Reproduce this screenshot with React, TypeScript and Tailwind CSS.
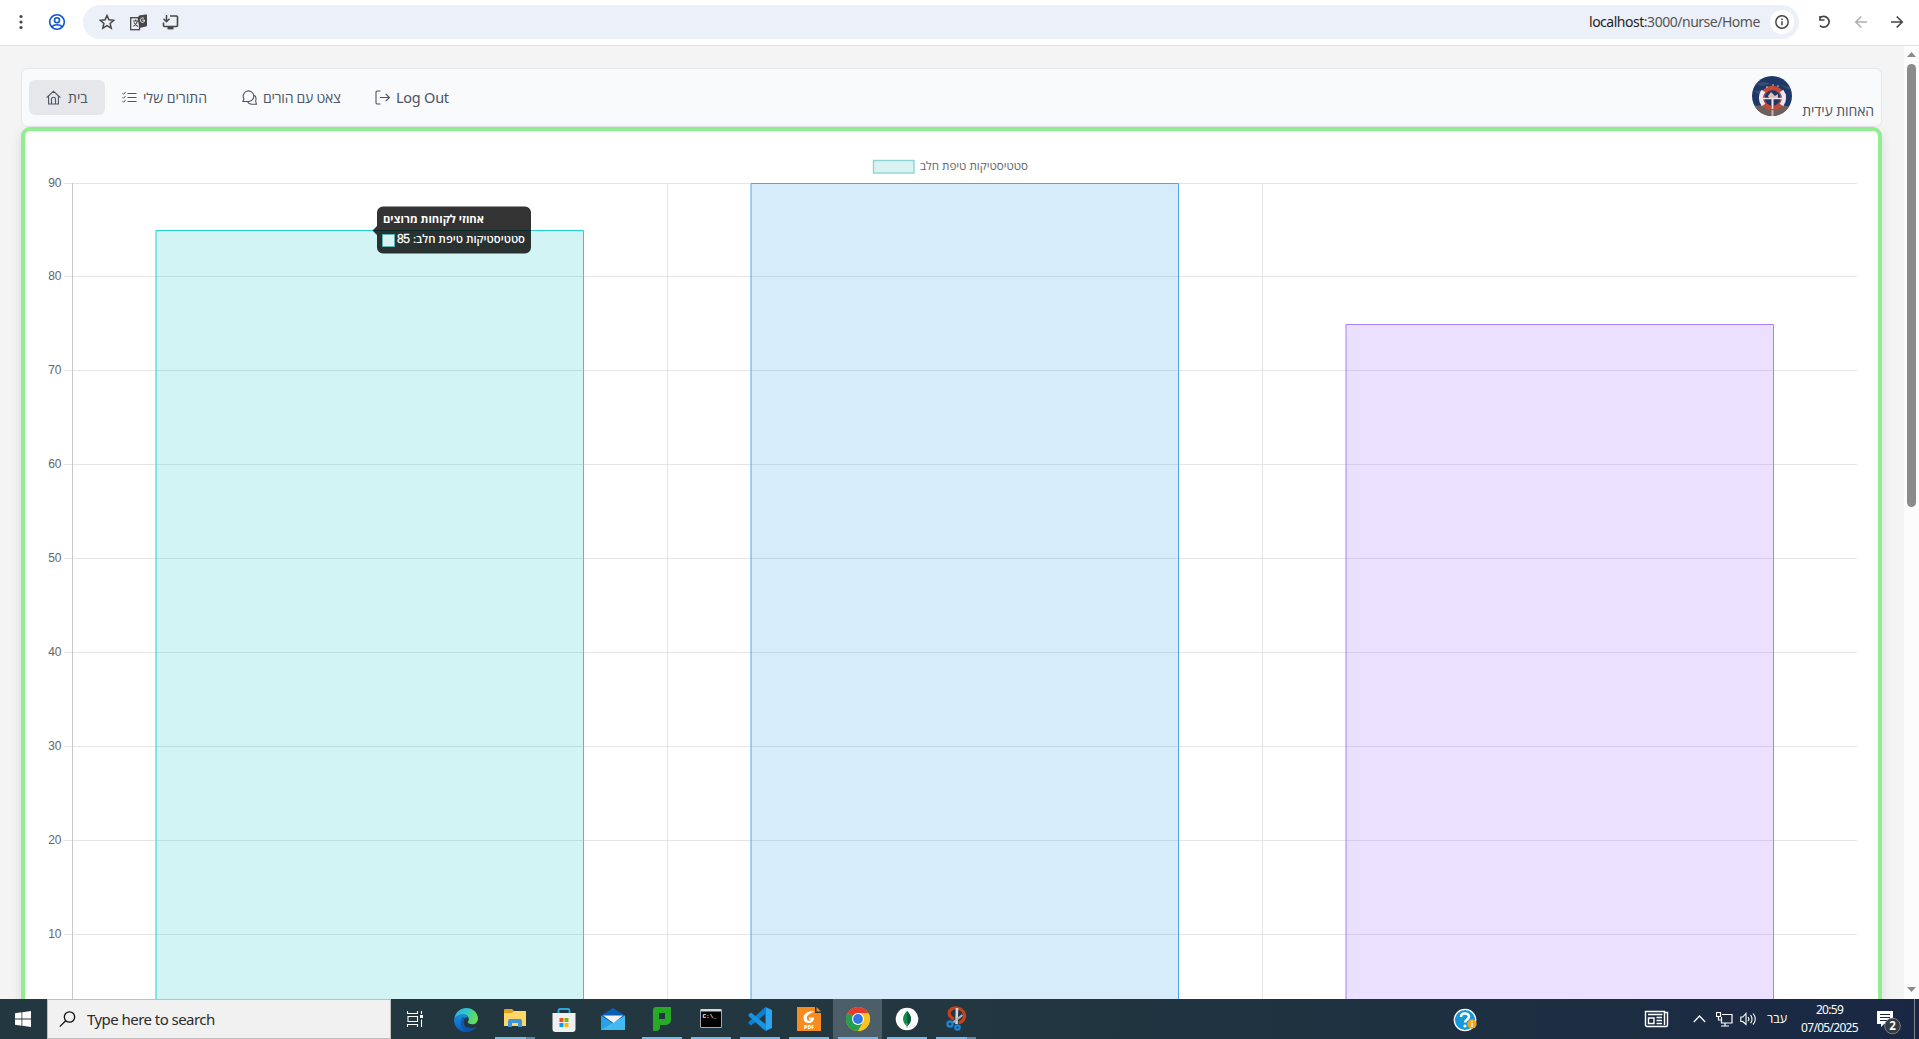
import React from "react";

const UI = "font-['Noto_Sans','Open_Sans',sans-serif]";

const ticks = [
  { v: 90, y: 183.5 },
  { v: 80, y: 276.5 },
  { v: 70, y: 370.5 },
  { v: 60, y: 464.5 },
  { v: 50, y: 558.5 },
  { v: 40, y: 652.5 },
  { v: 30, y: 746.5 },
  { v: 20, y: 840.5 },
  { v: 10, y: 934.5 },
];

const bars = [
  { x: 156, top: 230.5, fill: "rgba(34,202,202,.2)", stroke: "#26d0ce" },
  { x: 751, top: 183.5, fill: "rgba(54,162,235,.2)", stroke: "#4ba9ea" },
  { x: 1346, top: 324.5, fill: "rgba(153,102,255,.2)", stroke: "#a980f5" },
];

function Chart() {
  // viewBox offsets keep the coordinates in window space
  return (
    <svg className="block h-[868px] w-[1853px] shrink-0" viewBox="25 131 1853 868" fontFamily="'Liberation Sans', sans-serif" fontSize="12">
      {ticks.map((t) => (
        <g key={t.v}>
          <path d={`M64 ${t.y}H1857`} stroke="#e5e5e5" />
          <text x="61.5" y={t.y + 3} textAnchor="end" fill="#666">{t.v}</text>
        </g>
      ))}
      <path d="M667.5 183V999M1262.5 183V999" stroke="#e5e5e5" />
      <path d="M72.5 183V999" stroke="#c8c8c8" />
      {bars.map((b) => (
        <path key={b.x} d={`M${b.x} 1010V${b.top}H${b.x + 427.5}V1010`} fill={b.fill} stroke={b.stroke} />
      ))}
      <rect x="873.5" y="160.5" width="40.5" height="12.5" fill="#dbf2f2" stroke="#8fd4d4" strokeWidth="1.4" />
      <text x="1028" y="170" direction="rtl" fill="#666" fontFamily="'Open Sans'" fontSize="11.5" textLength="108" lengthAdjust="spacingAndGlyphs">סטטיסטיקות טיפת חלב</text>
      <path d="M383 206.5H525a6 6 0 0 1 6 6V247.500a6 6 0 0 1-6 6H383a6 6 0 0 1-6-6V235L372.500 230.500L377 226V212.500a6 6 0 0 1 6-6Z" fill="#000" fillOpacity=".8" />
      <text x="484" y="223" direction="rtl" fill="#fff" fontFamily="'Open Sans'" fontWeight="700" fontSize="11.5" textLength="101" lengthAdjust="spacingAndGlyphs">אחוזי לקוחות מרוצים</text>
      <rect x="382.500" y="234.500" width="12" height="12" fill="#dbf2f2" stroke="#4bc0c0" strokeOpacity=".75" />
      <text x="525" y="243" direction="rtl" fill="#fff" fontFamily="'Open Sans'" fontWeight="600" fontSize="11.5" textLength="112" lengthAdjust="spacingAndGlyphs">סטטיסטיקות טיפת חלב:</text>
      <text x="397" y="243" fill="#fff" stroke="#fff" strokeWidth=".3" textLength="13">85</text>
    </svg>
  );
}

function Ico({ w, h = w, vb, className = "", children }: { w: number; h?: number; vb?: string; className?: string; children: React.ReactNode }) {
  return (
    <svg width={w} height={h} viewBox={vb || `0 0 ${w} ${h}`} fill="none" stroke="currentColor" className={"shrink-0 " + className}>
      {children}
    </svg>
  );
}

function BrowserBar() {
  return (
    <header className="flex h-[46px] shrink-0 items-start border-b border-[#dfe0e1] bg-white pt-[5px] text-[#474747]">
      <Ico w={83} h={34}>
        <g fill="currentColor" stroke="none"><circle cx="21" cy="11.500" r="1.600" /><circle cx="21" cy="17" r="1.600" /><circle cx="21" cy="22.500" r="1.600" /></g>
        <g stroke="#0b57d0" strokeWidth="1.600"><circle cx="57" cy="17" r="7.300" /><circle cx="57" cy="15.300" r="2.500" /><path d="M51.500 22c3-3 8-3 11 0" /></g>
      </Ico>
      <div className="flex h-[34px] w-[1716px] items-center rounded-full bg-[#ecf0f9] pl-[16px] pr-[5px]">
        <Ico w={14} vb="0 0 14 14" className="h-[16px] w-[16px]"><path d="M7 1.300l1.700 3.800 4.200.4-3.200 2.800 1 4.100L7 10.200l-3.700 2.200 1-4.100L1.100 5.500l4.200-.4z" strokeWidth="1.300" /></Ico>
        <Ico w={17} className="ml-[15px]">
          <path d="M9 1.500L15.500 0.500a1 1 0 0 1 1.500 1V11.500a1 1 0 0 1-1 1L9.500 14L7.500 4z" fill="currentColor" stroke="none" />
          <rect x=".7" y="3.700" width="8.800" height="12" strokeWidth="1.300" />
          <path d="M3 7h5.500M5.700 5.500V7M7.500 7c-.5 2.500-2 4-4 5.200M4 8.500c1 1.800 2 3 3.800 4" strokeWidth="1.100" />
          <path d="M14.500 6.200h-2.200M14.500 6.200c0 1.500-1 2.300-2 2.300s-2-1-2-2.300 1-2.300 2-2.300c.6 0 1 .2 1.400.6" stroke="#fff" strokeWidth="1" />
        </Ico>
        <Ico w={17} className="ml-[15px]">
          <path d="M8 2h6.500a1 1 0 0 1 1 1v8.500a1 1 0 0 1-1 1h-12a1 1 0 0 1-1-1V8.500" strokeWidth="1.600" />
          <path d="M4.500 1v6M1.500 4.800l3 3 3-3" strokeWidth="1.500" />
          <path d="M5.500 14.200h6" strokeWidth="2.400" />
        </Ico>
        <div className={`ml-auto w-[171px] whitespace-nowrap text-[14px] tracking-[-0.48px] leading-[20px] text-[#555] ${UI}`}>
          <span className="text-[#1f1f1f]">localhost</span>:3000/nurse/Home
        </div>
        <div className="ml-[10px] grid size-[24px] place-items-center rounded-full bg-white">
          <Ico w={16}><circle cx="8" cy="8" r="6.200" strokeWidth="1.500" /><path d="M8 7.300v3.900M8 4.600v1.500" strokeWidth="1.500" /></Ico>
        </div>
      </div>
      <Ico w={120} h={34}>
        <path d="M21 12.800A5.400 5.400 0 1 1 20.800 20.500M21 11v4h4.500" strokeWidth="1.700" />
        <path d="M68 17H57M62.300 11.500L56.800 17l5.500 5.500" stroke="#b0b0b0" strokeWidth="1.600" />
        <path d="M92 17h11M97.700 11.500l5.500 5.500-5.500 5.500" strokeWidth="1.700" />
      </Ico>
    </header>
  );
}

function NavItem({ label, icon, box, text }: { label: string; icon: React.ReactNode; box: string; text: string }) {
  return (
    <a className={"flex h-[35px] items-center rounded-[6px] pl-[17px] " + box}>
      {icon}
      <span className={"ml-[6px] whitespace-nowrap leading-[20px] " + text}>{label}</span>
    </a>
  );
}

function NavBar() {
  return (
    <nav className={`flex h-[59px] w-[1861px] shrink-0 rounded-[6px] border border-[#e5e7eb] bg-[#f9fafb] pl-[7px] pt-[11px] text-[#4b5563] ${UI}`}>
      <NavItem label="בית" box="w-[76px] bg-[#e5e7eb]" text="text-[14px] pl-[1px]" icon={
        <Ico w={15}><path d="M.6 7.600L7.500 1.300l6.900 6.300M2.600 6v8h9.800V6M5.500 14V9.200a2 2 0 0 1 4 0V14" strokeWidth="1.100" /></Ico>} />
      <NavItem label="התורים שלי" box="w-[120px]" text="text-[14px]" icon={
        <Ico w={15}><path d="M5.500 3.500h9M5.500 7.500h9M5.500 11.500h9M.5 3.200l1.100 1.100 2-2.400M.5 7.200l1.100 1.100 2-2.400M.5 11.200l1.100 1.100 2-2.400" strokeWidth="1" /></Ico>} />
      <NavItem label="צאט עם הורים" box="w-[133px]" text="text-[14px] tracking-[-0.25px]" icon={
        <Ico w={15}><path d="M.8 11.500h5.500a5.300 5.300 0 1 0-4.300-2.500zM12.200 5.200a5 5 0 0 1 1.400 5.700l.8 3.300H9.500a5 5 0 0 1-4.200-2.700" strokeWidth="1.100" /></Ico>} />
      <NavItem label="Log Out" box="w-[110px]" text="-mt-[1px] text-[14.5px] tracking-[-0.25px]" icon={
        <Ico w={15}><path d="M5.500 1H2.300A1.300 1.300 0 0 0 1 2.300v10.400A1.300 1.300 0 0 0 2.300 14h3.200M5 7.500h9.300M10.700 3.800l3.700 3.700-3.700 3.700" strokeWidth="1.100" /></Ico>} />
      <div className="ml-auto flex gap-[10px] pr-[8px]">
        <svg className="-mt-[4px] size-[40px] rounded-full" viewBox="0 0 40 40">
          <rect width="40" height="40" fill="#1d3766" />
          <path d="M0 8l12-2 8 2-10 2zM2 15l9-1 3 2-8 2zM28 9l10 2v3z" fill="#394c74" />
          <path d="M0 30l12-1 9 3 8-3 11 2v10H0z" fill="#70605c" />
          <path d="M19.500 21h2v19h-2z" fill="#c9b5b5" />
          <circle cx="20.500" cy="22" r="10" fill="none" stroke="#c74a34" strokeWidth="4.500" />
          <path d="M11.500 15a11.500 11.500 0 0 0 0 14M29.500 15a11.500 11.500 0 0 1 0 14" fill="none" stroke="#f2e6f3" strokeWidth="4.500" />
          <path d="M13.500 17a9 9 0 0 0 0 10M27.500 17a9 9 0 0 1 0 10" fill="none" stroke="#5a5580" strokeWidth=".8" />
          <path d="M8 22.500h25M20.500 22v11" stroke="#f0e4e4" strokeWidth="1.500" />
          <path d="M16 20l3-4 4 4 3-2v4h-9z" fill="#dfc0bd" />
          <g fill="#fff"><circle cx="21" cy="9" r=".7" /><circle cx="26" cy="10" r=".7" /><circle cx="15" cy="11" r=".7" /><circle cx="9" cy="16" r=".7" /><circle cx="33" cy="19" r=".7" /></g>
        </svg>
        <span className="-mr-[1px] mt-[19px] w-[72px] whitespace-nowrap text-[14px] leading-[24px] tracking-[-0.1px]" dir="rtl">האחות עידית</span>
      </div>
    </nav>
  );
}

function Slot({ children, className = "", run }: { children: React.ReactNode; className?: string; run?: "one" | "many" }) {
  return (
    <div className={"flex h-[40px] w-[49px] flex-col items-center " + className}>
      <div className="grid h-[38px] w-full flex-1 place-items-center pt-[1px]">{children}</div>
      {run && (
        <div className="flex h-[2px] w-[40px]">
          <i className="flex-1 bg-[#76b9ed]" />
          {run === "many" && <i className="w-[9px] bg-[#5b86a8]" />}
        </div>
      )}
    </div>
  );
}

function TaskBar() {
  return (
    <footer className={`flex h-[40px] w-full shrink-0 bg-linear-to-r from-[#223740] from-50% via-[#1d3040] via-75% to-[#1a2744] text-white ${UI}`}>
      <div className="grid w-[47px] place-items-center pr-[1px]">
        <svg width="16" height="16" viewBox="0 0 16 16" fill="#fff"><path d="M0 2.200l6.500-.9v6.300H0zM7.300 1.200L16 0v7.600H7.300zM0 8.400h6.500v6.300L0 13.800zM7.300 8.400H16V16l-8.700-1.200z" /></svg>
      </div>
      <div className="flex w-[344px] items-center border border-[#bfbfbf] bg-[#f1f1f1] pl-[11px] text-[#2b2b2b]">
        <Ico w={17} className="text-[#111]"><circle cx="10.500" cy="6" r="5.200" strokeWidth="1.300" /><path d="M6.700 9.700L.8 15.600" strokeWidth="1.300" /></Ico>
        <span className="ml-[11px] whitespace-nowrap text-[15px] tracking-[-0.55px]">Type here to search</span>
      </div>
      <Slot>
        <Ico w={17}><path d="M.5 0v2.500h10V0M.5 16v-2.500h10V16M1 5.500h9.500v5H1zM14.500 0v3M14.500 8.500V16" strokeWidth="1.100" /><path d="M13 4h3v3h-3z" fill="#fff" stroke="none" /></Ico>
      </Slot>
      <div className="flex pl-px">
        <Slot>
          <svg width="24" height="24" viewBox="0 0 24 24">
            <defs>
              <linearGradient id="eg" x1="0" y1="0" x2="1" y2=".3"><stop offset="0" stopColor="#27b0e6" /><stop offset=".5" stopColor="#2fc5cf" /><stop offset="1" stopColor="#66dd54" /></linearGradient>
              <linearGradient id="eb" x1="0" y1="0" x2="0" y2="1"><stop offset="0" stopColor="#1b8ddb" /><stop offset="1" stopColor="#0a5dbd" /></linearGradient>
            </defs>
            <path d="M.3 10.500C1.500 4 6.500 0 12.300 0 19 0 24 5 24 10.500c0 3.500-2.500 5.800-5.700 5.800-3 0-4.500-1.300-4.500-2.200 0-.7 1-1 1-3 0-2.300-2-4.600-5.500-4.600-4 0-7.500 2.300-9 4z" fill="url(#eg)" />
            <path d="M.1 11.500C1 8 5 6.500 8.500 6.500c3 0 5.300 1.600 6 3-3-1-5 1.500-5 4.500 0 5 5 8 12.500 5C20 22 16 24 12 24 5.500 24-.5 18.500.1 11.500z" fill="url(#eb)" />
            <path d="M8.500 9C6 12 5.500 20 12 23.800c4 .2 8-2 10-5-7 3-12.500 0-12.500-4.800 0-2 .5-3.500 2-4.500z" fill="#0f4b9c" opacity=".65" />
          </svg>
        </Slot>
        <Slot run="many">
          <svg width="22" height="19" viewBox="0 0 22 19"><path d="M0 1a1 1 0 0 1 1-1h7l2 2h11a1 1 0 0 1 1 1v14H0z" fill="#e3a21a" /><path d="M0 4h8l2-2h11a1 1 0 0 1 1 1v14H0z" fill="#ffd766" /><path d="M4 18V12a2 2 0 0 1 2-2h10a2 2 0 0 1 2 2v6h-4v-4H8v4z" fill="#3e95d9" /></svg>
        </Slot>
        <Slot>
          <svg width="24" height="24" viewBox="0 0 24 24"><path d="M6.500 6V2.500A1.500 1.500 0 0 1 8 1h8a1.500 1.500 0 0 1 1.500 1.500V6" fill="none" stroke="#2aa7dd" strokeWidth="1.800" /><path d="M.5 5h23v16a3 3 0 0 1-3 3h-17a3 3 0 0 1-3-3z" fill="#f0f0f0" /><path fill="#f25022" d="M7.500 10h4v4h-4z" /><path fill="#7fba00" d="M12.500 10h4v4h-4z" /><path fill="#00a4ef" d="M7.500 15h4v4h-4z" /><path fill="#ffb900" d="M12.500 15h4v4h-4z" /></svg>
        </Slot>
        <Slot>
          <svg width="24" height="23" viewBox="0 0 24 23"><path d="M0 7.500L12 0l12 7.500-12 8z" fill="#0a5db5" /><path d="M0 7.500L13 16l11-8.500V22H0z" fill="#2aa3e6" /><path d="M0 22L24 7.500V22z" fill="#43b9f2" /><path d="M2 7.500h20l-9.500 7.500z" fill="#f2f2f2" /></svg>
        </Slot>
        <Slot run="one">
          <svg width="18" height="24" viewBox="0 0 18 24"><path d="M3 0h15v13a5 5 0 0 1-5 5H7v2a4 4 0 0 1-4 4H0V3a3 3 0 0 1 3-3z" fill="#27ab27" /><path d="M6 6h6v6H6z" fill="#20363e" /></svg>
        </Slot>
        <Slot run="one">
          <svg width="22" height="19" viewBox="0 0 22 19"><path d="M.5.5h21v18H.5z" fill="#000" stroke="#a7a7a7" /><path d="M1 0h20v2.500H1z" fill="#d8d8d8" /><text x="2.500" y="8.500" fontSize="6" fontFamily="Liberation Mono" fontWeight="700" fill="#fff">C:\_</text></svg>
        </Slot>
        <Slot run="one">
          <svg width="24" height="24" viewBox="0 0 24 24"><path d="M17.500 0L24 3v18l-6.500 3z" fill="#2aa5f2" /><path d="M18 6.500L3 18.500.5 16.500v-1.500L17.500 0z" fill="#0d7fcf" /><path d="M18 17.500L3 5.500.5 7.500V9l17 15z" fill="#1b92e0" /></svg>
        </Slot>
        <Slot run="one">
          <svg width="24" height="24" viewBox="0 0 24 24"><path d="M0 0h18v6h6v18H0z" fill="#f68b1f" /><path d="M19.500 0l4.500 4.500h-4.500z" fill="#f68b1f" /><path d="M17.500 4.500c-5-1-11 1.500-11 6.500 0 4 3 5 5.500 5 3.500 0 5-2.500 5-5.500h-5v2h2c-.5 1-1 1.300-2 1.300-1.500 0-2.200-1-2.200-2.800 0-3 3-4.500 7.700-6.500z" fill="#fff" /><text x="7" y="22.300" fontSize="5" fontWeight="800" fontFamily="Open Sans" fill="#fff" textLength="10">PDF</text></svg>
        </Slot>
        <Slot run="one" className="bg-[#4c5e68]">
          <svg width="24" height="24" viewBox="0 0 24 24"><circle cx="12" cy="12" r="12" fill="#fcc31e" /><path d="M12 12L1.600 6A12 12 0 0 1 22.400 6z" fill="#e33b2e" /><path d="M1.600 6A12 12 0 0 0 12 24l5.200-9L12 12z" fill="#239f4f" /><path d="M12 6h10.400A12 12 0 0 1 12 24l5.200-9z" fill="#fcc31e" /><circle cx="12" cy="12" r="6" fill="#fff" /><circle cx="12" cy="12" r="4.900" fill="#3277e5" /></svg>
        </Slot>
        <Slot run="one">
          <svg width="24" height="24" viewBox="0 0 24 24"><circle cx="12" cy="12" r="11.300" fill="#fff" /><path d="M12 4c6 6 4.500 12 0 15.500C7.500 16 6 10 12 4z" fill="#178a4d" /><path d="M12 4c6 6 4.500 12 0 15.500z" fill="#0b5c43" /><path d="M12 16v5" stroke="#8a9" /></svg>
        </Slot>
        <Slot run="many">
          <svg width="22" height="25" viewBox="0 0 22 25" fill="none"><path d="M9 13C4.500 11 3 7.500 5 4.500S12 1 16 3.500s4.500 7 2.500 10-5 3-5 3" stroke="#c8401c" strokeWidth="3.200" /><path d="M12 2l-.5 16" stroke="#d5d8da" strokeWidth="2.600" /><path d="M17.500 9L8 16.500" stroke="#a9afb3" strokeWidth="2.200" /><circle cx="5" cy="18" r="2.600" stroke="#1e86d8" strokeWidth="2.200" /><circle cx="12.500" cy="21.500" r="2.200" stroke="#1e86d8" strokeWidth="2.200" /></svg>
        </Slot>
      </div>
      <div className="ml-auto flex w-[466px] items-center">
        <svg className="mt-[1px] shrink-0" width="25" height="24" viewBox="0 0 25 24"><circle cx="12" cy="12" r="10.700" fill="#1698d8" stroke="#fff" strokeWidth="1.300" /><path d="M8 9c0-5 8-4.500 8-.5 0 3-4 3-4 6" fill="none" stroke="#fff" strokeWidth="2.500" /><circle cx="12" cy="18" r="1.600" fill="#fff" /><circle cx="19" cy="16" r="4.700" fill="#f6a21b" /><path d="M19 13v1.200M19 15v4" stroke="#fff" strokeWidth="1.500" /></svg>
        <Ico w={25} h={18} className="ml-[166px]"><path d="M20.500 2.500h3V15a1.500 1.500 0 0 1-1.500 1.500H3A1.500 1.500 0 0 1 1.500 15V1.500h19V15M4 4.500h14.500M4.500 8h5.500v5.500H4.500zM12.500 7.500H18M12.500 10.500H18M12.500 13.500H18" strokeWidth="1.400" /></Ico>
        <Ico w={13} h={8} className="ml-[24px]"><path d="M.8 7l5.700-6 5.700 6" strokeWidth="1.300" /></Ico>
        <Ico w={17} h={15} className="ml-[10px]"><path d="M6 2.500h10v8.500H5.500V5M9 11v3M5 14h8M.5.500h4v4h-4zM2.500 4.500v3.500h3" strokeWidth="1.200" /></Ico>
        <Ico w={18} h={14} className="ml-[7px]"><path d="M.8 5v4.500h2L6 12.500V1.500L2.800 5zM8 5c1 1.200 1 3 0 4M10.500 3c2 2.500 2 6 0 8M13 1.500c3 3.500 3 8 0 11" strokeWidth="1.100" /></Ico>
        <span className="ml-[9px] w-[22px] whitespace-nowrap text-[12.5px]">עבר</span>
        <div className="ml-[3px] w-[75px] text-center text-[12px] leading-[18px] tracking-[-0.7px]"><div>20:59</div><div className="whitespace-nowrap">07/05/2025</div></div>
        <svg className="ml-[6px] mt-[6px] shrink-0" width="32" height="30" viewBox="0 0 32 30"><path d="M4 4h16v13H11l-3 3v-3H4z" fill="#fff" /><path d="M7 7.500h10M7 10.500h10M7 13.500h10" stroke="#1b2944" /><circle cx="19.500" cy="19" r="7.800" fill="#363a40" stroke="#7b8088" /><text x="19.500" y="23.200" textAnchor="middle" fontSize="11.500" fontWeight="700" fill="#fff">2</text></svg>
        <i className="ml-auto mr-[4px] h-[40px] w-px bg-[#7d8593]" />
      </div>
    </footer>
  );
}

export default function App() {
  return (
    <div className="flex h-[1039px] w-[1919px] flex-col overflow-hidden bg-[#f4f4f4]">
      <BrowserBar />
      <main className="flex h-[953px] shrink-0 overflow-hidden">
        <div className="flex flex-1 flex-col overflow-hidden pl-[21px] pt-[22px]">
          <NavBar />
          <section className="h-[1000px] w-[1861px] shrink-0 rounded-[9px] border-4 border-[#90ee90] bg-white shadow-[0_4px_12px_rgba(0,0,0,0.1)]">
            <Chart />
          </section>
        </div>
        <div className="flex w-[15px] flex-col items-center bg-[#fcfcfc] pt-[6px]">
          <svg width="9" height="5" viewBox="0 0 9 5"><path d="M0 5L4.500 0 9 5z" fill="#8b8b8b" /></svg>
          <div className="mt-[7px] h-[443px] w-[9px] rounded-full bg-[#8b8b8b]" />
          <svg className="mb-[7px] mt-auto" width="9" height="5" viewBox="0 0 9 5"><path d="M0 0h9L4.500 5z" fill="#8b8b8b" /></svg>
        </div>
      </main>
      <TaskBar />
    </div>
  );
}
